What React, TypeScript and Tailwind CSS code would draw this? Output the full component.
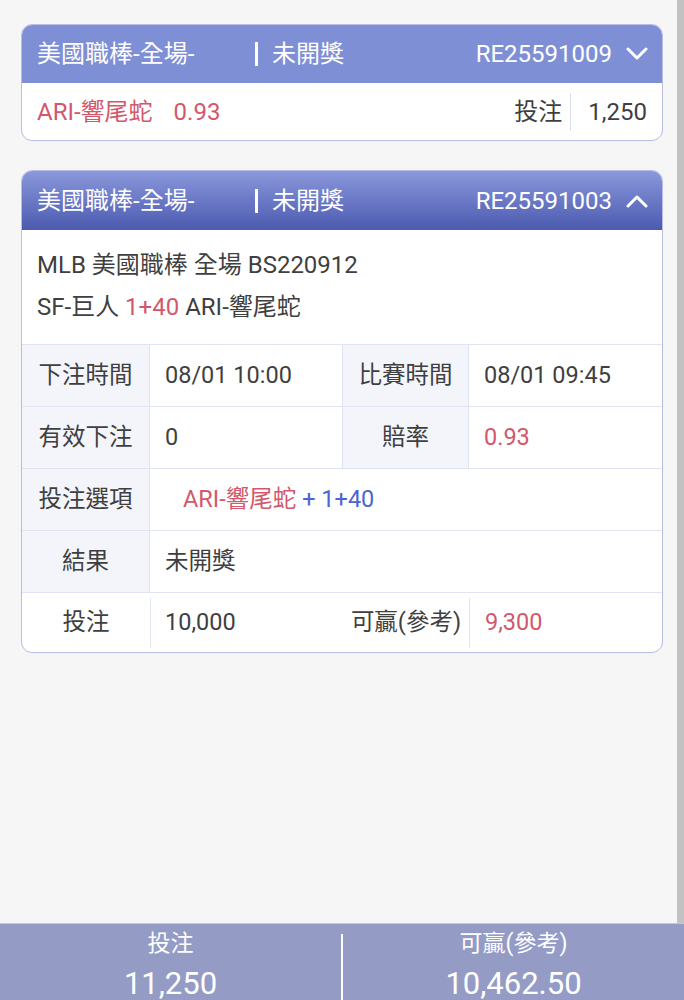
import React from "react";

const font = { fontFamily: 'Roboto, "Noto Sans CJK TC", "Noto Sans", sans-serif' };

const Chevron = ({ up }: { up?: boolean }) => (
    <svg width="22" height="14" viewBox="0 0 22 14" className="ml-[14px]">
        <polyline
            points={up ? "2,12 11,3 20,12" : "2,2 11,11 20,2"}
            fill="none"
            stroke="white"
            strokeWidth="3"
            strokeLinecap="round"
            strokeLinejoin="round"
        />
    </svg>
);

const CardHeader = ({ id, open }: { id: string; open?: boolean }) => (
    <div
        className={
            "flex items-center pl-[15px] pr-[14px] text-white text-[24px] " +
            (open
                ? "h-[59px] bg-gradient-to-b from-[#8b98dc] to-[#4c5aaf]"
                : "h-[58px] bg-[#7f8fd6]")
        }
    >
        <div className="w-[218px] whitespace-nowrap">美國職棒-全場-</div>
        <div className="w-[3px] h-[24px] bg-white mr-[14px]" />
        <div>未開獎</div>
        <div className="ml-auto flex items-center">
            <span>{id}</span>
            <Chevron up={open} />
        </div>
    </div>
);

export default function App() {
    return (
        <div style={font} className="relative w-[684px] h-[1000px] overflow-hidden bg-[#f6f6f7] text-[#3f3f3f] flex flex-col">
            {/* list */}
            <div className="h-[923px] shrink-0 px-[21px] pt-[24px] flex flex-col gap-[29px]">

                {/* collapsed ticket */}
                <div className="rounded-[11px] border border-[#b9bde3] bg-white overflow-hidden">
                    <CardHeader id="RE25591009" />
                    <div className="h-[57px] flex items-center pl-[15px] pr-[15px] text-[24px]">
                        <span className="text-[#d2586b]">ARI-響尾蛇</span>
                        <span className="text-[#d2586b] ml-[21px]">0.93</span>
                        <span className="ml-auto">投注</span>
                        <div className="w-[1px] h-[38px] bg-[#dcdff0] mx-[8px]" />
                        <span className="ml-[9px]">1,250</span>
                    </div>
                </div>

                {/* expanded ticket */}
                <div className="rounded-[11px] border border-[#b9bde3] bg-white overflow-hidden">
                    <CardHeader id="RE25591003" open />

                    <div className="pt-[14px] pb-[16px] pl-[15px] text-[24px] leading-[42px]">
                        <div>MLB 美國職棒 全場 BS220912</div>
                        <div>
                            SF-巨人 <span className="text-[#d2586b]">1+40</span> ARI-響尾蛇
                        </div>
                    </div>

                    <div className="grid grid-cols-[128px_193px_126px_1fr] text-[23.5px]">
                        <div className="h-[62px] flex items-center justify-center bg-[#f4f5fb] border-t border-r border-[#e0e3f3]">下注時間</div>
                        <div className="h-[62px] flex items-center pl-[15px] border-t border-r border-[#e0e3f3]">08/01 10:00</div>
                        <div className="h-[62px] flex items-center justify-center bg-[#f4f5fb] border-t border-r border-[#e0e3f3]">比賽時間</div>
                        <div className="h-[62px] flex items-center pl-[15px] border-t border-[#e0e3f3]">08/01 09:45</div>

                        <div className="h-[62px] flex items-center justify-center bg-[#f4f5fb] border-t border-r border-[#e0e3f3]">有效下注</div>
                        <div className="h-[62px] flex items-center pl-[15px] border-t border-r border-[#e0e3f3]">0</div>
                        <div className="h-[62px] flex items-center justify-center bg-[#f4f5fb] border-t border-r border-[#e0e3f3]">賠率</div>
                        <div className="h-[62px] flex items-center pl-[15px] border-t border-[#e0e3f3] text-[#d2586b]">0.93</div>

                        <div className="h-[62px] flex items-center justify-center bg-[#f4f5fb] border-t border-r border-[#e0e3f3]">投注選項</div>
                        <div className="col-span-3 h-[62px] flex items-center pl-[33px] border-t border-[#e0e3f3]">
                            <span className="text-[#d2586b]">ARI-響尾蛇</span>
                            <span className="text-[#4a64d6] ml-[6px]">+ 1+40</span>
                        </div>

                        <div className="h-[62px] flex items-center justify-center bg-[#f4f5fb] border-t border-r border-[#e0e3f3]">結果</div>
                        <div className="col-span-3 h-[62px] flex items-center pl-[15px] border-t border-[#e0e3f3]">未開獎</div>

                        {/* last row, short separators */}
                        <div className="col-span-4 h-[60px] flex items-center border-t border-[#e0e3f3]">
                            <div className="w-[128px] text-center">投注</div>
                            <div className="w-[1px] h-[50px] bg-[#e0e3f3]" />
                            <div className="w-[192px] pl-[14px]">10,000</div>
                            <div className="w-[126px] text-center">可贏(參考)</div>
                            <div className="w-[1px] h-[50px] bg-[#e0e3f3]" />
                            <div className="pl-[15px] text-[#d2586b]">9,300</div>
                        </div>
                    </div>
                </div>
            </div>

            {/* totals bar */}
            <div className="flex-1 flex bg-[#949cc6] border-t border-[#c3c7e0] text-white">
                <div className="w-[341px] flex flex-col items-center">
                    <div className="text-[23px] leading-[30px] mt-[5px]">投注</div>
                    <div className="text-[31px] leading-[50px]">11,250</div>
                </div>
                <div className="w-[2px] bg-white mt-[10px]" />
                <div className="flex-1 flex flex-col items-center">
                    <div className="text-[23px] leading-[30px] mt-[5px]">可贏(參考)</div>
                    <div className="text-[31px] leading-[50px]">10,462.50</div>
                </div>
            </div>

            {/* scrollbar */}
            <div className="absolute right-0 top-0 w-[7px] h-[923px] bg-[#c2c2c2]" />
        </div>
    );
}
